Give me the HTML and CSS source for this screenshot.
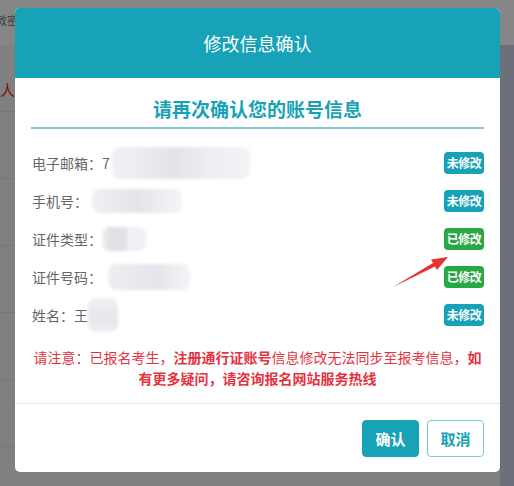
FILE: index.html
```html
<!DOCTYPE html>
<html lang="zh-CN">
<head>
    <meta charset="UTF-8">
    <meta name="viewport" content="width=device-width, initial-scale=1.0">
    <title>修改信息确认</title>
    <link rel="stylesheet" href="styles.css">
</head>
<body>
    <div class="page">
        <div class="page-top">
            <span class="page-tab">敦密</span>
        </div>
        <div class="page-main">
            <span class="page-mark">人</span>
        </div>
        <div class="page-side"></div>
    </div>

    <div class="modal">
        <div class="modal-header">修改信息确认</div>
        <div class="modal-body">
            <h2 class="subtitle">请再次确认您的账号信息</h2>
            <ul class="info-list">
                <li class="info-row">
                    <span class="label">电子邮箱：7<span class="mask mask-email"></span></span>
                    <span class="badge">未修改</span>
                </li>
                <li class="info-row">
                    <span class="label">手机号：<span class="mask mask-phone"></span></span>
                    <span class="badge">未修改</span>
                </li>
                <li class="info-row">
                    <span class="label">证件类型：<span class="mask mask-type"></span></span>
                    <span class="badge badge-changed">已修改</span>
                </li>
                <li class="info-row">
                    <span class="label">证件号码：<span class="mask mask-id"></span></span>
                    <span class="badge badge-changed">已修改</span>
                </li>
                <li class="info-row">
                    <span class="label">姓名：王<span class="mask mask-name"></span></span>
                    <span class="badge">未修改</span>
                </li>
            </ul>
            <p class="notice">请注意：已报名考生，<b>注册通行证账号</b>信息修改无法同步至报考信息，<b>如有更多疑问，请咨询报名网站服务热线</b></p>
        </div>
        <div class="modal-footer">
            <button class="btn btn-primary">确认</button>
            <button class="btn btn-outline">取消</button>
        </div>
    </div>

    <svg class="arrow" width="514" height="486" viewBox="0 0 514 486">
        <polygon points="393,287 433,262.9 431.1,259.4 448,257 436.9,270 435,266.5" fill="#e8322f" />
    </svg>
</body>
</html>
```

FILE: styles.css
```css
:root {
    --teal: #17a2b8;
    --teal-light: #7ccbd7;
    --green: #28a745;
    --red: #e5323f;
    --text: #666;
}

* {
    box-sizing: border-box;
}

body {
    margin: 0;
    width: 514px;
    height: 486px;
    overflow: hidden;
    position: relative;
    font-family: "Noto Sans CJK SC", "Noto Sans", sans-serif;
    background-color: #808080;
}

/* page behind the overlay */
.page {
    display: grid;
    grid-template-columns: 1fr 14px;
    grid-template-rows: 45px 1fr;
    height: 100%;
}

.page-top {
    grid-column: 1 / 3;
    background-color: #868686;
    padding: 6px 0 0 0;
}

.page-tab {
    font-size: 11px;
    color: #3a3a3a;
    line-height: 14px;
    margin-left: -4px;
}

.page-main {
    background-color: #808080;
    background-image: repeating-linear-gradient(to bottom, transparent 0, transparent 66px, #777 66px, #777 67px);
    padding: 32px 0 0 0;
}

.page-mark {
    font-size: 15px;
    color: #7a1010;
    line-height: 18px;
}

.page-side {
    background-color: #6d707a;
}

/* modal */
.modal {
    position: absolute;
    left: 15px;
    top: 8px;
    width: 485px;
    background: #fff;
    border-radius: 5px;
    overflow: hidden;
}

.modal-header {
    height: 70px;
    background-color: var(--teal);
    color: #fff;
    font-size: 18px;
    line-height: 70px;
    text-align: center;
}

.modal-body {
    padding: 18px 16px 14px;
}

.subtitle {
    margin: 0;
    padding-bottom: 6px;
    border-bottom: 2px solid var(--teal-light);
    color: var(--teal);
    font-size: 19px;
    font-weight: 700;
    line-height: 25px;
    text-align: center;
}

.info-list {
    list-style: none;
    margin: 15px 0 0;
    padding: 0;
}

.info-row {
    display: flex;
    align-items: center;
    justify-content: space-between;
    height: 38px;
    padding-left: 1px;
}

.label {
    display: flex;
    align-items: center;
    font-size: 14px;
    color: var(--text);
    line-height: 20px;
}

.mask {
    display: inline-block;
    border-radius: 8px;
    filter: blur(1.5px);
}

.mask-email {
    width: 138px;
    height: 32px;
    margin-left: 2px;
    background: linear-gradient(to right, #f0f1f4 0, #e9ebef 25%, #e2e4e9 45%, #eceef1 70%, #f2f3f5 100%);
}

.mask-phone {
    width: 90px;
    height: 24px;
    margin-left: 4px;
    background: linear-gradient(to right, #eef0f3 0, #e3e5ea 50%, #f3f4f6 100%);
}

.mask-type {
    width: 44px;
    height: 24px;
    background: linear-gradient(to right, #f0f1f4 0, #dfe1e6 20%, #dfe1e6 55%, #f0f1f4 60%);
}

.mask-id {
    width: 82px;
    height: 26px;
    margin-left: 6px;
    background: linear-gradient(to right, #eceef1 0, #e4e6eb 60%, #f3f4f6 100%);
}

.mask-name {
    width: 30px;
    height: 34px;
    background: linear-gradient(to bottom, #eef0f3 0, #e4e6eb 60%, #eceef1 100%);
}

.badge {
    width: 40px;
    height: 22px;
    border-radius: 4px;
    background-color: var(--teal);
    color: #fff;
    font-size: 12px;
    font-weight: 700;
    line-height: 22px;
    text-align: center;
    letter-spacing: -0.5px;
}

.badge-changed {
    background-color: var(--green);
}

.notice {
    margin: 13px 0 0;
    color: var(--red);
    font-size: 14px;
    line-height: 21px;
    text-align: center;
}

.modal-footer {
    display: flex;
    justify-content: flex-end;
    gap: 8px;
    border-top: 1px solid #e6e6e6;
    padding: 16px 16px 15px;
}

.btn {
    width: 57px;
    height: 37px;
    border-radius: 4px;
    font-family: inherit;
    font-size: 15px;
    font-weight: 700;
    cursor: pointer;
}

.btn-primary {
    background-color: var(--teal);
    border: 1px solid var(--teal);
    color: #fff;
}

.btn-outline {
    background-color: #fff;
    border: 1px solid var(--teal-light);
    color: var(--teal);
}

.arrow {
    position: absolute;
    left: 0;
    top: 0;
    pointer-events: none;
}
```
